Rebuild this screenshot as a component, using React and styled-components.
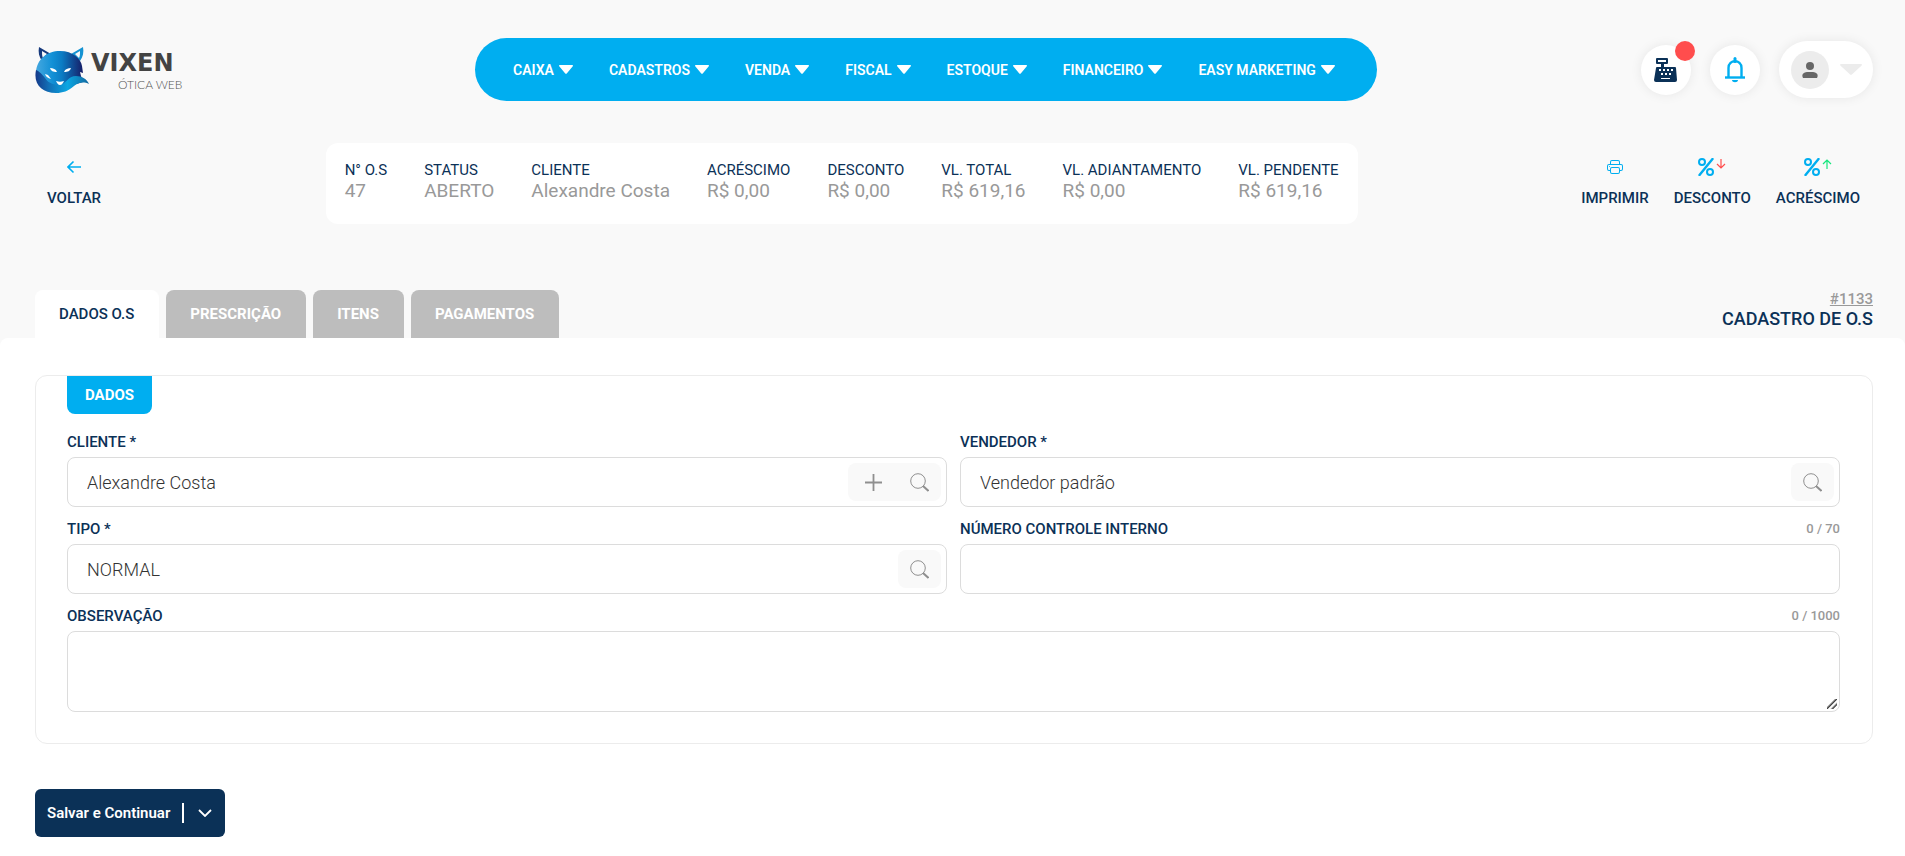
import React from "react";
import styled, { createGlobalStyle, css } from "styled-components";
import { BsPrinter } from "react-icons/bs";

const color = {
  brand: "#00aef0",
  navy: "#0b3157",
  page: "#f9f9f9",
  muted: "#999999",
  border: "#dcdcdc",
};

const GlobalStyle = createGlobalStyle`
  * { box-sizing: border-box; }
  body {
    margin: 0;
    background: #ffffff;
    color: ${color.navy};
    font-family: Roboto, "Liberation Sans", sans-serif;
    font-size: 15px;
  }
  button, input, textarea { font: inherit; color: inherit; }
  button { padding: 0; border: 0; background: none; cursor: pointer; }
`;

const Top = styled.header`
  padding: 38px 32px 0 35px;
  background: ${color.page};
`;

const Bar = styled.div`
  display: flex;
  align-items: center;
  justify-content: space-between;
`;

const Brand = styled.a`
  display: block;
  width: 176px;
  height: 48px;
  svg { display: block; }
`;

const Nav = styled.nav`
  display: flex;
  align-items: center;
  gap: 36px;
  height: 63px;
  padding: 0 42px 0 38px;
  border-radius: 32px;
  background: ${color.brand};
`;

const NavButton = styled.button`
  display: flex;
  align-items: center;
  gap: 5px;
  color: #ffffff;
  font-size: 14px;
  font-weight: 600;
  white-space: nowrap;
`;

const HeaderTools = styled.div`
  display: flex;
  align-items: center;
  gap: 19px;
`;

const bubble = css`
  display: flex;
  align-items: center;
  justify-content: center;
  background: #ffffff;
  box-shadow: 0 0 12px rgba(0, 0, 0, 0.08);
`;

const RoundButton = styled.button`
  ${bubble}
  position: relative;
  width: 50px;
  height: 50px;
  border-radius: 50%;
  color: ${color.brand};
`;

const Alert = styled.span`
  position: absolute;
  top: -4px;
  right: -4px;
  width: 20px;
  height: 20px;
  border-radius: 50%;
  background: #ff4d4d;
`;

const UserButton = styled.button`
  ${bubble}
  gap: 11px;
  height: 57px;
  padding: 0 11px 0 12px;
  border-radius: 29px;
`;

const Avatar = styled.span`
  display: flex;
  align-items: center;
  justify-content: center;
  width: 38px;
  height: 38px;
  border-radius: 50%;
  background: #ececec;
`;

const SummaryRow = styled(Bar)`
  margin-top: 42px;
`;

const Actions = styled.div`
  display: flex;
`;

const Action = styled.button`
  display: flex;
  flex-direction: column;
  align-items: center;
  gap: 12px;
  padding: 0 13px 2px 12px;
  font-weight: 500;
  line-height: 20px;
`;

const ActionIcon = styled.span`
  display: flex;
  gap: 2px;
  height: 18px;
  align-items: center;
  color: ${color.brand};
`;

const Summary = styled.dl`
  display: flex;
  gap: 37px;
  height: 81px;
  margin: 0;
  padding: 17px 19px;
  border-radius: 12px;
  background: #ffffff;
  white-space: nowrap;
`;

const Term = styled.dt`
  line-height: 20px;
`;

const Value = styled.dd`
  margin: 0;
  color: ${color.muted};
  font-size: 19px;
  line-height: 21px;
`;

const TabRow = styled.div`
  display: flex;
  align-items: flex-end;
  justify-content: space-between;
  margin-top: 66px;
`;

const Tabs = styled.div`
  display: flex;
  gap: 7px;
`;

const Tab = styled.button`
  height: 48px;
  padding: 0 25px 0 24px;
  border-radius: 8px 8px 0 0;
  background: ${(p) => (p.$active ? "#ffffff" : "#bdbdbd")};
  color: ${(p) => (p.$active ? color.navy : "#ffffff")};
  font-weight: ${(p) => (p.$active ? 500 : 700)};
`;

const Heading = styled.div`
  padding-bottom: 8px;
  text-align: right;
`;

const RecordLink = styled.a`
  display: block;
  color: ${color.muted};
  font-weight: 500;
  line-height: 18px;
`;

const Title = styled.h1`
  margin: 0;
  font-size: 18px;
  font-weight: 500;
  line-height: 22px;
`;

const Backdrop = styled.div`
  background: ${color.page};
`;

const Main = styled.main`
  padding: 37px 32px 18px 35px;
  border-radius: 8px 8px 0 0;
  background: #ffffff;
`;

const Panel = styled.section`
  padding: 0 32px 31px 31px;
  border: 1px solid #ececec;
  border-radius: 12px;
`;

const PanelTitle = styled.h2`
  width: fit-content;
  margin: 0 0 18px;
  padding: 0 18px;
  border-radius: 0 0 8px 8px;
  background: ${color.brand};
  color: #ffffff;
  font-size: 15px;
  font-weight: 700;
  line-height: 38px;
`;

const Fields = styled.div`
  display: grid;
  grid-template-columns: 1fr 1fr;
  gap: 12px 13px;
`;

const Field = styled.div`
  grid-column: ${(p) => (p.$wide ? "1 / -1" : "auto")};
`;

const FieldHead = styled.div`
  display: flex;
  justify-content: space-between;
  height: 25px;
  line-height: 20px;
`;

const Label = styled.label`
  font-weight: 500;
`;

const Counter = styled.span`
  color: ${color.muted};
  font-size: 13px;
  font-weight: 500;
`;

const Control = styled.div`
  display: flex;
  align-items: center;
  height: 50px;
  padding: 0 5px 0 0;
  border: 1px solid ${color.border};
  border-radius: 8px;
`;

const Input = styled.input`
  flex: 1;
  min-width: 0;
  height: 48px;
  padding: 0 19px;
  border: 0;
  outline: 0;
  background: none;
  color: #333333;
  font-size: 18px;
  font-weight: 300;
`;

const TextArea = styled.textarea`
  display: block;
  width: 100%;
  height: 81px;
  padding: 12px 19px;
  border: 1px solid ${color.border};
  border-radius: 8px;
  outline: 0;
  color: #333333;
  font-size: 18px;
  font-weight: 300;
  resize: vertical;

  &::-webkit-resizer {
    background: linear-gradient(
        135deg,
        transparent 5px,
        #333333 7px,
        transparent 8px,
        transparent 9px,
        #333333 11px,
        transparent 12px
      )
      3px 3px / 10px 10px no-repeat;
  }
`;

const FieldTools = styled.div`
  display: flex;
  border-radius: 8px;
  background: ${color.page};
`;

const FieldTool = styled.button`
  display: flex;
  align-items: center;
  justify-content: center;
  width: ${(p) => (p.$wide ? "50px" : "43px")};
  height: 38px;
  color: #8f8f8f;
`;

const SaveGroup = styled.div`
  display: flex;
  align-items: center;
  width: fit-content;
  height: 48px;
  margin-top: 45px;
  border-radius: 6px;
  background: ${color.navy};
  color: #ffffff;
`;

const SaveButton = styled.button`
  height: 100%;
  padding: 0 12px;
  font-weight: 600;
`;

const MoreButton = styled.button`
  display: flex;
  align-items: center;
  justify-content: center;
  width: 43px;
  height: 20px;
  border-left: 2px solid #ffffff;
`;

const TrendArrow = styled.span`
  display: flex;
  align-self: flex-start;
  color: ${(p) => (p.$up ? "#17e67e" : "#ff4d4d")};
`;

const Caret = ({ width, height, fill }) => (
  <svg width={width} height={height} viewBox="0 0 13 8" preserveAspectRatio="none" fill={fill} aria-hidden="true">
    <path d="M.6 0h11.8c.5 0 .8.6.4 1L7.2 7.5c-.4.5-1 .5-1.4 0L.2 1C-.2.6.1 0 .6 0z" />
  </svg>
);

const Logo = () => (
  <svg width="176" height="48" viewBox="0 0 176 48" role="img" aria-label="Vixen Ótica Web">
    <defs>
      <linearGradient id="face" x1="0" x2="1">
        <stop offset="0" stopColor="#45a8e0" />
        <stop offset=".35" stopColor="#1290d6" />
        <stop offset=".55" stopColor="#0b7cc4" />
        <stop offset="1" stopColor="#161c66" />
      </linearGradient>
      <linearGradient id="tail" x1="0" x2="1">
        <stop offset="0" stopColor="#153a8a" />
        <stop offset=".25" stopColor="#126fb6" />
        <stop offset=".6" stopColor="#0ba6e2" />
        <stop offset="1" stopColor="#12689f" />
      </linearGradient>
    </defs>
    <path fillRule="evenodd" d="M4 1l12 7-9 7C4 11 3 6 4 1zM7 5c0 3 0 5 1 7l4-4z" fill="#173a7d" />
    <path fillRule="evenodd" d="M48 1L36 8l9 7c3-4 4-9 3-14zM45 5c0 3 0 5-1 7l-4-4z" fill="#1693d2" />
    <path d="M1 26C2 13 12 5 25 5s21 8 22 15l1 7-3-1 1 4 2 6-20 6-16-4C6 36 2 32 1 26z" fill="url(#face)" />
    <path d="M1 24c3 1 7 5 9 8 4 6 10 7 15 7 6-1 8-9 16-9 6 0 11 3 13 8-6-3-11-1-15 2-6 5-11 7-18 7C7 47-2 38 1 24z" fill="url(#tail)" />
    <path d="M15 22c3 0 6 1 7 4-4 0-6-1-7-4zM36 22c-3 0-6 1-7 4 4 0 6-1 7-4zM10 28c1 3 3 4 6 5l-3-4zM21 35c3 1 5 1 8 0-1 2-2 4-4 4s-3-2-4-4z" fill="#ffffff" />
    <text x="56" y="25" fill="#434343" fontFamily="DejaVu Sans, sans-serif" fontWeight="700" fontSize="24">
      VIXEN
    </text>
    <text x="83" y="43" fill="#555555" fontFamily="Lato, sans-serif" fontWeight="300" fontSize="12">
      ÓTICA WEB
    </text>
  </svg>
);

const Register = () => (
  <svg width="24" height="24" viewBox="0 0 24 24" fill={color.navy} aria-hidden="true">
    <path
      fillRule="evenodd"
      d="M3 0h10q1 0 1 1v4q0 1-1 1h-3v3h11q1 0 1 1l1 12q0 2-2 2H2q-2 0-2-2l2-12q0-1 1-1h4V6H3Q2 6 2 5V1q0-1 1-1zM4 2v2h8V2zM5 11h2v2H5zM9 11h2v2H9zM13 11h2v2h-2zM17 11h2v2h-2zM7 15h2v2H7zM11 15h2v2h-2zM15 15h2v2h-2zM7 20v1h9v-1z"
    />
  </svg>
);

const Bell = () => (
  <svg width="22" height="26" viewBox="0 0 22 26" fill="none" stroke="currentColor" aria-hidden="true">
    <path d="M4.500 20V11c0-9 13-9 13 0v9" strokeWidth="2.400" />
    <path d="M1 20.500h20" strokeWidth="2.400" />
    <path d="M11 1.500v3" strokeWidth="3" strokeLinecap="round" />
    <path d="M8 23h6c0 3-6 3-6 0z" fill="currentColor" stroke="none" />
  </svg>
);

const Person = () => (
  <svg width="16" height="16" viewBox="0 0 16 16" fill="#666666" aria-hidden="true">
    <circle cx="8" cy="4" r="4" />
    <path d="M1 16c-2-4 1-6 5-6h4c4 0 7 2 5 6z" />
  </svg>
);

const Percent = () => (
  <svg width="16" height="18" viewBox="0 0 16 18" fill="none" stroke="currentColor" aria-hidden="true">
    <circle cx="4" cy="4" r="3" strokeWidth="2" />
    <circle cx="12" cy="14" r="3" strokeWidth="2" />
    <path d="M14.500 1L1.500 17" strokeWidth="2.400" strokeLinecap="round" />
  </svg>
);

const Trend = ({ up }) => (
  <svg width="10" height="11" viewBox="0 0 10 11" fill="none" stroke="currentColor" strokeWidth="1.200" aria-hidden="true">
    <path d={up ? "M5 11V2M1 6l4-4 4 4" : "M5 1v9M1 6l4 4 4-4"} />
  </svg>
);

const ArrowLeft = () => (
  <svg width="14" height="14" viewBox="0 0 14 14" fill="none" stroke="currentColor" aria-hidden="true">
    <path d="M14 7H1M6.500 1.500L1 7l5.500 5.500" strokeWidth="1.600" />
  </svg>
);

const Plus = () => (
  <svg width="17" height="17" viewBox="0 0 17 17" stroke="currentColor" aria-hidden="true">
    <path d="M8.500 0v17M0 8.500h17" strokeWidth="1.800" />
  </svg>
);

const Search = () => (
  <svg width="19" height="19" viewBox="0 0 19 19" fill="none" stroke="currentColor" aria-hidden="true">
    <circle cx="8" cy="8" r="7.300" />
    <path d="M13 13l5.500 5" strokeWidth="2" />
  </svg>
);

const ChevronDown = () => (
  <svg width="14" height="8" viewBox="0 0 14 8" fill="none" stroke="currentColor" aria-hidden="true">
    <path d="M1 1l6 6 6-6" strokeWidth="1.800" />
  </svg>
);

const MENU = ["CAIXA", "CADASTROS", "VENDA", "FISCAL", "ESTOQUE", "FINANCEIRO", "EASY MARKETING"];

const SUMMARY = [
  ["N° O.S", "47"],
  ["STATUS", "ABERTO"],
  ["CLIENTE", "Alexandre Costa"],
  ["ACRÉSCIMO", "R$ 0,00"],
  ["DESCONTO", "R$ 0,00"],
  ["VL. TOTAL", "R$ 619,16"],
  ["VL. ADIANTAMENTO", "R$ 0,00"],
  ["VL. PENDENTE", "R$ 619,16"],
];

const TABS = ["DADOS O.S", "PRESCRIÇÃO", "ITENS", "PAGAMENTOS"];

function TextField({ id, label, value = "", counter, add, search }) {
  return (
    <Field>
      <FieldHead>
        <Label htmlFor={id}>{label}</Label>
        {counter && <Counter>{counter}</Counter>}
      </FieldHead>
      <Control>
        <Input id={id} type="text" defaultValue={value} />
        {search && (
          <FieldTools>
            {add && (
              <FieldTool $wide type="button" aria-label="Adicionar">
                <Plus />
              </FieldTool>
            )}
            <FieldTool type="button" aria-label="Pesquisar">
              <Search />
            </FieldTool>
          </FieldTools>
        )}
      </Control>
    </Field>
  );
}

export default function App() {
  return (
    <>
      <GlobalStyle />
      <Top>
        <Bar>
          <Brand href="#">
            <Logo />
          </Brand>
          <Nav>
            {MENU.map((item) => (
              <NavButton key={item} type="button">
                {item}
                <Caret width={14} height={9} fill="#ffffff" />
              </NavButton>
            ))}
          </Nav>
          <HeaderTools>
            <RoundButton type="button" aria-label="Caixa">
              <Register />
              <Alert />
            </RoundButton>
            <RoundButton type="button" aria-label="Notificações">
              <Bell />
            </RoundButton>
            <UserButton type="button" aria-label="Usuário">
              <Avatar>
                <Person />
              </Avatar>
              <Caret width={22} height={11} fill="#ececec" />
            </UserButton>
          </HeaderTools>
        </Bar>

        <SummaryRow>
          <Action type="button">
            <ActionIcon>
              <ArrowLeft />
            </ActionIcon>
            VOLTAR
          </Action>
          <Summary>
            {SUMMARY.map(([term, value]) => (
              <div key={term}>
                <Term>{term}</Term>
                <Value>{value}</Value>
              </div>
            ))}
          </Summary>
          <Actions>
            <Action type="button">
              <ActionIcon>
                <BsPrinter size={16} />
              </ActionIcon>
              IMPRIMIR
            </Action>
            <Action type="button">
              <ActionIcon>
                <Percent />
                <TrendArrow>
                  <Trend />
                </TrendArrow>
              </ActionIcon>
              DESCONTO
            </Action>
            <Action type="button">
              <ActionIcon>
                <Percent />
                <TrendArrow $up>
                  <Trend up />
                </TrendArrow>
              </ActionIcon>
              ACRÉSCIMO
            </Action>
          </Actions>
        </SummaryRow>

        <TabRow>
          <Tabs role="tablist">
            {TABS.map((tab, i) => (
              <Tab key={tab} type="button" role="tab" aria-selected={i === 0} $active={i === 0}>
                {tab}
              </Tab>
            ))}
          </Tabs>
          <Heading>
            <RecordLink href="#">#1133</RecordLink>
            <Title>CADASTRO DE O.S</Title>
          </Heading>
        </TabRow>
      </Top>

      <Backdrop>
        <Main>
          <Panel>
            <PanelTitle>DADOS</PanelTitle>
            <Fields>
              <TextField id="cliente" label="CLIENTE *" value="Alexandre Costa" add search />
              <TextField id="vendedor" label="VENDEDOR *" value="Vendedor padrão" search />
              <TextField id="tipo" label="TIPO *" value="NORMAL" search />
              <TextField id="controle" label="NÚMERO CONTROLE INTERNO" counter="0 / 70" />
              <Field $wide>
                <FieldHead>
                  <Label htmlFor="observacao">OBSERVAÇÃO</Label>
                  <Counter>0 / 1000</Counter>
                </FieldHead>
                <TextArea id="observacao" />
              </Field>
            </Fields>
          </Panel>
          <SaveGroup>
            <SaveButton type="button">Salvar e Continuar</SaveButton>
            <MoreButton type="button" aria-label="Mais opções">
              <ChevronDown />
            </MoreButton>
          </SaveGroup>
        </Main>
      </Backdrop>
    </>
  );
}
